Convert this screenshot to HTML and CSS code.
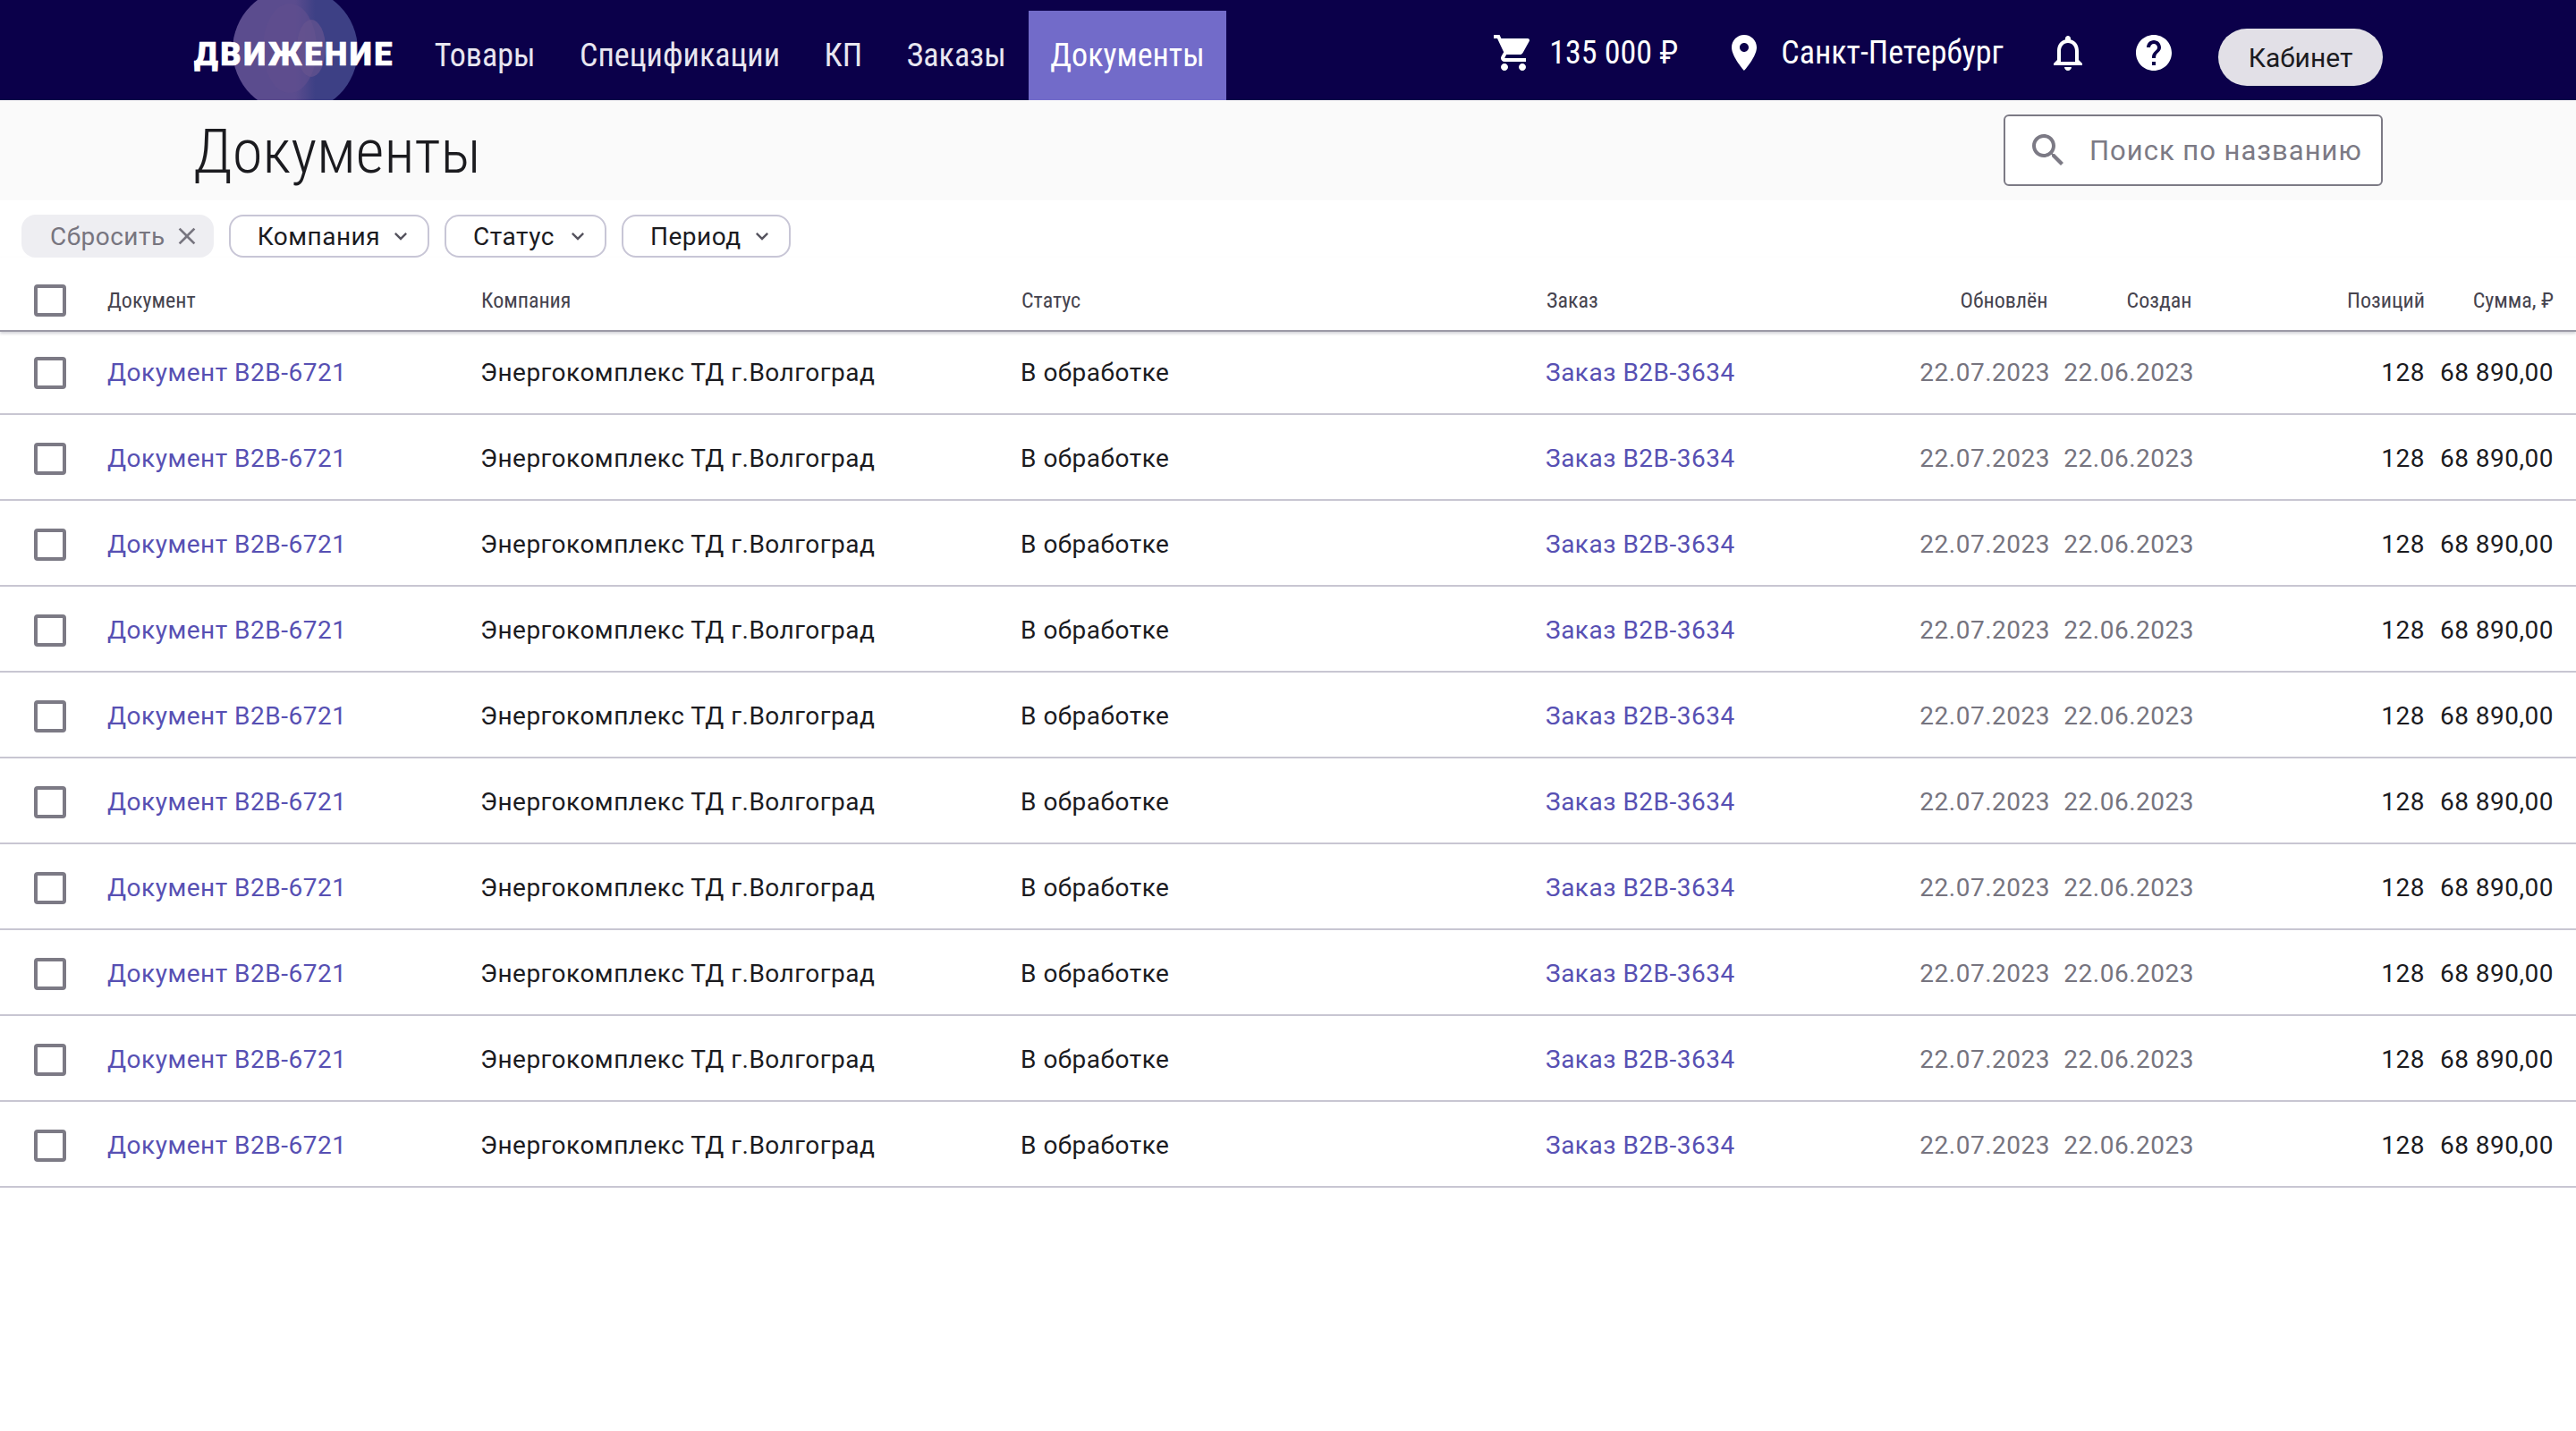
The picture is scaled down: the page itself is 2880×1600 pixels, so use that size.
FILE: index.html
```html
<!DOCTYPE html>
<html lang="ru">

<head>
    <meta charset="UTF-8">
    <title>Документы</title>
    <link rel="stylesheet" href="styles.css">
</head>

<body>
    <header class="topbar">
        <a class="logo">
            <svg class="logo-mark" width="140" height="112" viewBox="0 0 140 112">
                <defs>
                    <linearGradient id="logoFill" x1="0" x2="1" y1="0" y2="0">
                        <stop offset="0.5" stop-color="#5b4c8e"/>
                        <stop offset="0.66" stop-color="#3d4085"/>
                    </linearGradient>
                </defs>
                <circle cx="70" cy="56" r="70" fill="url(#logoFill)"/>
                <ellipse cx="64" cy="54" rx="30" ry="50" fill="#5f4f8e" opacity="0.7"/>
                <ellipse cx="88" cy="54" rx="16" ry="32" fill="#66548f" opacity="0.7"/>
            </svg>
            <span class="logo-text">ДВИЖЕНИЕ</span>
        </a>
        <nav class="nav">
            <a class="nav-item">Товары</a>
            <a class="nav-item">Спецификации</a>
            <a class="nav-item">КП</a>
            <a class="nav-item">Заказы</a>
            <a class="nav-item active">Документы</a>
        </nav>
        <div class="topbar-right">
            <div class="top-link cart">
                <svg class="icon" viewBox="0 0 24 24"><path d="M7 18c-1.1 0-1.99.9-1.99 2S5.9 22 7 22s2-.9 2-2-.9-2-2-2zM1 2v2h2l3.6 7.59-1.35 2.45c-.16.28-.25.61-.25.96 0 1.1.9 2 2 2h12v-2H7.42c-.14 0-.25-.11-.25-.25l.03-.12.9-1.63h7.45c.75 0 1.41-.41 1.75-1.03l3.58-6.49c.08-.14.12-.31.12-.48 0-.55-.45-1-1-1H5.21l-.94-2H1zm16 16c-1.1 0-1.99.9-1.99 2s.89 2 1.99 2 2-.9 2-2-.9-2-2-2z"/></svg>
                <span>135 000 ₽</span>
            </div>
            <div class="top-link city">
                <svg class="icon" viewBox="0 0 24 24"><path d="M12 2C8.13 2 5 5.13 5 9c0 5.25 7 13 7 13s7-7.75 7-13c0-3.87-3.13-7-7-7zm0 9.5c-1.38 0-2.5-1.12-2.5-2.5s1.12-2.5 2.5-2.5 2.5 1.12 2.5 2.5-1.12 2.5-2.5 2.5z"/></svg>
                <span>Санкт-Петербург</span>
            </div>
            <svg class="icon bell" viewBox="0 0 24 24"><path d="M12 22c1.1 0 2-.9 2-2h-4c0 1.1.89 2 2 2zm6-6v-5c0-3.07-1.64-5.64-4.5-6.32V4c0-.83-.67-1.5-1.5-1.5s-1.5.67-1.5 1.5v.68C7.63 5.36 6 7.92 6 11v5l-2 2v1h16v-1l-2-2zm-2 1H8v-6c0-2.48 1.51-4.5 4-4.5s4 2.02 4 4.5v6z"/></svg>
            <svg class="icon help" viewBox="0 0 24 24"><path d="M12 2C6.48 2 2 6.48 2 12s4.48 10 10 10 10-4.48 10-10S17.52 2 12 2zm1 17h-2v-2h2v2zm2.07-7.75l-.9.92C13.45 12.9 13 13.5 13 15h-2v-.5c0-1.1.45-2.1 1.17-2.83l1.24-1.26c.37-.36.59-.86.59-1.41 0-1.1-.9-2-2-2s-2 .9-2 2H8c0-2.21 1.79-4 4-4s4 1.79 4 4c0 .88-.36 1.68-.93 2.25z"/></svg>
            <button class="cabinet">Кабинет</button>
        </div>
    </header>

    <div class="page-head">
        <h1>Документы</h1>
        <div class="search">
            <svg class="icon" viewBox="0 0 24 24"><path d="M15.5 14h-.79l-.28-.27C15.41 12.59 16 11.11 16 9.5 16 5.91 13.09 3 9.5 3S3 5.91 3 9.5 5.91 16 9.5 16c1.61 0 3.09-.59 4.23-1.57l.27.28v.79l5 4.99L20.49 19l-4.99-5zm-6 0C7.01 14 5 11.99 5 9.5S7.01 5 9.5 5 14 7.01 14 9.5 11.99 14 9.5 14z"/></svg>
            <span>Поиск по названию</span>
        </div>
    </div>

    <div class="filters">
        <button class="chip reset">Сбросить
            <svg class="chip-close" viewBox="0 0 24 24"><path d="M19 6.41L17.59 5 12 10.59 6.41 5 5 6.41 10.59 12 5 17.59 6.41 19 12 13.41 17.59 19 19 17.59 13.41 12z"/></svg>
        </button>
        <button class="chip">Компания
            <svg class="chip-arrow" viewBox="0 0 24 24"><path d="M16.59 8.59L12 13.17 7.41 8.59 6 10l6 6 6-6z"/></svg>
        </button>
        <button class="chip chip-wide">Статус
            <svg class="chip-arrow" viewBox="0 0 24 24"><path d="M16.59 8.59L12 13.17 7.41 8.59 6 10l6 6 6-6z"/></svg>
        </button>
        <button class="chip">Период
            <svg class="chip-arrow" viewBox="0 0 24 24"><path d="M16.59 8.59L12 13.17 7.41 8.59 6 10l6 6 6-6z"/></svg>
        </button>
    </div>

    <div class="table">
        <div class="row head">
            <span class="check"></span>
            <span>Документ</span>
            <span class="head-shift">Компания</span>
            <span class="head-shift">Статус</span>
            <span class="head-shift">Заказ</span>
            <span class="num head-date">Обновлён</span>
            <span class="num head-date">Создан</span>
            <span class="num">Позиций</span>
            <span class="num">Сумма, ₽</span>
        </div>
        <div class="row"><span class="check"></span><a class="link">Документ B2B-6721</a><span>Энергокомплекс ТД г.Волгоград</span><span>В обработке</span><a class="link">Заказ B2B-3634</a><span class="num muted">22.07.2023</span><span class="num muted">22.06.2023</span><span class="num">128</span><span class="num">68 890,00</span></div>
        <div class="row"><span class="check"></span><a class="link">Документ B2B-6721</a><span>Энергокомплекс ТД г.Волгоград</span><span>В обработке</span><a class="link">Заказ B2B-3634</a><span class="num muted">22.07.2023</span><span class="num muted">22.06.2023</span><span class="num">128</span><span class="num">68 890,00</span></div>
        <div class="row"><span class="check"></span><a class="link">Документ B2B-6721</a><span>Энергокомплекс ТД г.Волгоград</span><span>В обработке</span><a class="link">Заказ B2B-3634</a><span class="num muted">22.07.2023</span><span class="num muted">22.06.2023</span><span class="num">128</span><span class="num">68 890,00</span></div>
        <div class="row"><span class="check"></span><a class="link">Документ B2B-6721</a><span>Энергокомплекс ТД г.Волгоград</span><span>В обработке</span><a class="link">Заказ B2B-3634</a><span class="num muted">22.07.2023</span><span class="num muted">22.06.2023</span><span class="num">128</span><span class="num">68 890,00</span></div>
        <div class="row"><span class="check"></span><a class="link">Документ B2B-6721</a><span>Энергокомплекс ТД г.Волгоград</span><span>В обработке</span><a class="link">Заказ B2B-3634</a><span class="num muted">22.07.2023</span><span class="num muted">22.06.2023</span><span class="num">128</span><span class="num">68 890,00</span></div>
        <div class="row"><span class="check"></span><a class="link">Документ B2B-6721</a><span>Энергокомплекс ТД г.Волгоград</span><span>В обработке</span><a class="link">Заказ B2B-3634</a><span class="num muted">22.07.2023</span><span class="num muted">22.06.2023</span><span class="num">128</span><span class="num">68 890,00</span></div>
        <div class="row"><span class="check"></span><a class="link">Документ B2B-6721</a><span>Энергокомплекс ТД г.Волгоград</span><span>В обработке</span><a class="link">Заказ B2B-3634</a><span class="num muted">22.07.2023</span><span class="num muted">22.06.2023</span><span class="num">128</span><span class="num">68 890,00</span></div>
        <div class="row"><span class="check"></span><a class="link">Документ B2B-6721</a><span>Энергокомплекс ТД г.Волгоград</span><span>В обработке</span><a class="link">Заказ B2B-3634</a><span class="num muted">22.07.2023</span><span class="num muted">22.06.2023</span><span class="num">128</span><span class="num">68 890,00</span></div>
        <div class="row"><span class="check"></span><a class="link">Документ B2B-6721</a><span>Энергокомплекс ТД г.Волгоград</span><span>В обработке</span><a class="link">Заказ B2B-3634</a><span class="num muted">22.07.2023</span><span class="num muted">22.06.2023</span><span class="num">128</span><span class="num">68 890,00</span></div>
        <div class="row"><span class="check"></span><a class="link">Документ B2B-6721</a><span>Энергокомплекс ТД г.Волгоград</span><span>В обработке</span><a class="link">Заказ B2B-3634</a><span class="num muted">22.07.2023</span><span class="num muted">22.06.2023</span><span class="num">128</span><span class="num">68 890,00</span></div>
    </div>
</body>

</html>
```

FILE: styles.css
```css
body {
    margin: 0;
    font-family: Roboto, sans-serif;
    color: #1b1b1f;
    background-color: white;
}

.icon {
    width: 48px;
    height: 48px;
    fill: white;
    flex: none;
}

.topbar {
    display: flex;
    align-items: stretch;
    height: 112px;
    padding: 0 216px;
    background-color: #0b004a;
    color: white;
    overflow: hidden;
}

.logo {
    position: relative;
    display: flex;
    align-items: center;
    width: 245px;
}

.logo-mark {
    position: absolute;
    left: 44px;
    top: 0;
}

.logo-text {
    position: relative;
    padding-top: 10px;
    padding-left: 1px;
    font-size: 36px;
    font-weight: 900;
    letter-spacing: 2.6px;
    -webkit-text-stroke: 0.6px white;
}

.nav {
    display: flex;
    align-items: stretch;
    padding-top: 12px;
}

.nav-item {
    display: flex;
    align-items: center;
    padding: 0 24.8px;
    font-size: 36px;
    font-stretch: 87%;
    color: #e8e6f0;
}

.nav-item.active {
    background-color: #726bc9;
    color: white;
}

.topbar-right {
    display: flex;
    align-items: center;
    box-sizing: border-box;
    padding-top: 6px;
    margin-left: auto;
    font-size: 36px;
    font-stretch: 87%;
}

.top-link {
    display: flex;
    align-items: center;
}

.cart {
    gap: 16px;
    margin-right: 50px;
}

.city {
    gap: 17px;
    margin-right: 48px;
}

.help {
    margin-left: 48px;
    margin-right: 48px;
}

.cabinet {
    width: 184px;
    height: 64px;
    margin-top: 10px;
    border: none;
    border-radius: 32px;
    background-color: #e2e0e7;
    color: #1b1b1f;
    font-family: Roboto, sans-serif;
    font-size: 30px;
    font-stretch: 90%;
}

.page-head {
    display: flex;
    align-items: center;
    justify-content: space-between;
    height: 112px;
    padding: 0 216px;
    background-color: #fafafa;
}

h1 {
    margin: 0;
    padding-top: 2px;
    font-size: 69px;
    font-weight: 300;
    font-stretch: 85%;
}

.search {
    display: flex;
    align-items: center;
    gap: 22px;
    box-sizing: border-box;
    width: 424px;
    height: 80px;
    padding-left: 24px;
    border: 2px solid #7c7a85;
    border-radius: 6px;
    background-color: white;
    color: #7c7a85;
    font-size: 31px;
    letter-spacing: 1px;
    white-space: nowrap;
}

.search .icon {
    fill: #7c7a85;
}

.filters {
    display: flex;
    gap: 17px;
    padding: 16px 24px 0;
}

.chip {
    display: flex;
    align-items: center;
    gap: 9px;
    height: 48px;
    padding: 0 16px 0 30px;
    border: 2px solid #c8c6d6;
    border-radius: 16px;
    background-color: white;
    color: #1b1b1f;
    font-family: Roboto, sans-serif;
    font-size: 28px;
    letter-spacing: 0.5px;
}

.chip-wide {
    gap: 12px;
}

.chip.reset {
    gap: 8px;
    border-color: #eeeef2;
    background-color: #eeeef2;
    color: #77757f;
    padding-right: 12px;
}

.chip-arrow {
    width: 28px;
    height: 28px;
    fill: #55535e;
}

.chip-close {
    width: 32px;
    height: 32px;
    fill: #77757f;
}

.row {
    display: grid;
    grid-template-columns: 120px 417px 604px 587px 299px 265px 161px 258px 144px;
    align-items: center;
    box-sizing: border-box;
    height: 96px;
    padding-top: 3px;
    border-bottom: 2px solid #c8c6d2;
    font-size: 28px;
    letter-spacing: 0.5px;
    white-space: nowrap;
}

.row.head {
    height: 83px;
    margin-bottom: -3px;
    padding-top: 15px;
    border-bottom: 2px solid #9c9aa6;
    box-shadow: 0 2px 3px rgba(80, 78, 100, 0.25);
    font-size: 24px;
    font-stretch: 87%;
    color: #45434e;
    letter-spacing: 0;
}

.head-shift {
    margin-left: 1px;
}

.head-date {
    margin-right: 2.5px;
}

.check {
    box-sizing: border-box;
    width: 36px;
    height: 36px;
    margin-left: 38px;
    border: 4px solid #7c7a85;
    border-radius: 4px;
}

.link {
    color: #5750b3;
}

.num {
    text-align: right;
}

.muted {
    color: #76747f;
}
```
